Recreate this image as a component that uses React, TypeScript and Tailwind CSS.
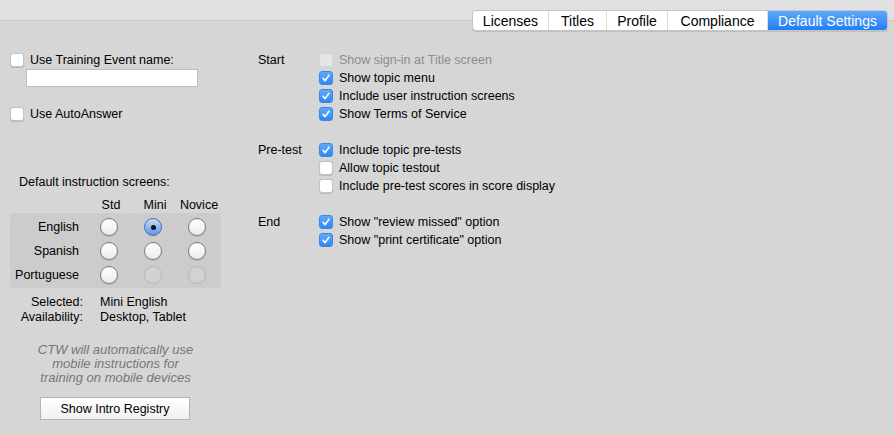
import { useState } from 'react';

const tabs = ['Licenses', 'Titles', 'Profile', 'Compliance', 'Default Settings'];
const tabWidths = [75, 58, 61, 100, 120];

const Check = ({ checked, disabled }: { checked?: boolean; disabled?: boolean }) => {
  if (checked) {
    return (
      <span className="flex h-[14px] w-[14px] shrink-0 items-center justify-center rounded-[3px] border border-[#3a86e8] bg-gradient-to-b from-[#5fa9fb] to-[#2f86f3]">
        <svg width="10" height="10" viewBox="0 0 10 10">
          <path d="M2 5.3 L4.1 7.6 L8 2.3" fill="none" stroke="white" strokeWidth="1.6" strokeLinecap="round" strokeLinejoin="round" />
        </svg>
      </span>
    );
  }
  return (
    <span
      className={
        'block h-[14px] w-[14px] shrink-0 rounded-[3px] border ' +
        (disabled ? 'border-[#d2d2d2] bg-[#e6e6e6]' : 'border-[#c4c4c4] bg-white shadow-[0_0.5px_1px_rgba(0,0,0,0.15)]')
      }
    />
  );
};

const Radio = ({ on, disabled }: { on?: boolean; disabled?: boolean }) => {
  if (on) {
    return (
      <span className="flex h-[18px] w-[18px] items-center justify-center rounded-full border border-[#4a6fa8] bg-gradient-to-b from-[#c9dcf5] to-[#5b95e4]">
        <span className="h-[5px] w-[5px] rounded-full bg-[#111]" />
      </span>
    );
  }
  return (
    <span
      className={
        'block h-[18px] w-[18px] rounded-full border ' +
        (disabled
          ? 'border-[#b5b5b5] bg-[#d2d2d2]'
          : 'border-[#7c7c7c] bg-gradient-to-b from-white to-[#ececec] shadow-[0_1px_1px_rgba(0,0,0,0.12)]')
      }
    />
  );
};

const Row = ({ label, checked, disabled }: { label: string; checked?: boolean; disabled?: boolean }) => (
  <div className="flex h-[18px] items-center gap-[6px]">
    <Check checked={checked} disabled={disabled} />
    <span className={disabled ? 'text-[#8c8c8c]' : 'text-black'}>{label}</span>
  </div>
);

const Group = ({ title, rows }: { title: string; rows: { label: string; checked?: boolean; disabled?: boolean }[] }) => (
  <div className="flex">
    <div className="w-[61px] leading-[18px]">{title}</div>
    <div className="flex flex-col">
      {rows.map((r) => (
        <Row key={r.label} {...r} />
      ))}
    </div>
  </div>
);

export default function App() {
  const [active] = useState('Default Settings');
  const langs = [
    { name: 'English', cells: ['off', 'on', 'off'] },
    { name: 'Spanish', cells: ['off', 'off', 'off'] },
    { name: 'Portuguese', cells: ['off', 'dis', 'dis'] },
  ];

  return (
    <div
      className="h-[435px] w-[894px] overflow-hidden bg-[#d6d6d6] text-[12.5px] leading-[18px] text-black"
      style={{ fontFamily: '"Liberation Sans", Arial, sans-serif' }}
    >
      {/* top band with tabs */}
      <div className="relative h-[21px] border-b border-[#cbcbcb] bg-[#e1e1e1]">
        <div className="absolute left-[472px] top-[10px] flex h-[21px] overflow-hidden rounded-[4px] border border-[#c6c6c6] bg-white text-[14px] shadow-[0_1px_1px_rgba(0,0,0,0.12)]">
          {tabs.map((t, i) => (
            <div
              key={t}
              className={
                'flex items-center justify-center ' +
                (i > 0 ? 'border-l border-[#dcdcdc] ' : '') +
                (t === active ? 'bg-gradient-to-b from-[#5ea7fb] to-[#1f7ef5] text-white' : 'text-black')
              }
              style={{ width: tabWidths[i] }}
            >
              {t}
            </div>
          ))}
        </div>
      </div>

      <div className="flex">
        {/* left column */}
        <div className="w-[258px] pl-[10px] pt-[30px]">
          <div className="flex h-[18px] items-center gap-[6px]">
            <Check />
            <span>Use Training Event name:</span>
          </div>
          <div className="ml-[16px] h-[18px] w-[172px] border border-[#bdbdbd] bg-white" />

          <div className="mt-[18px] flex h-[18px] items-center gap-[6px]">
            <Check />
            <span>Use AutoAnswer</span>
          </div>

          <div className="mt-[50px] pl-[9px]">Default instruction screens:</div>

          <div className="mt-[6px] grid h-[16px] w-[211px] grid-cols-[79px_44px_44px_44px] leading-[16px]">
            <div />
            {['Std', 'Mini', 'Novice'].map((h) => (
              <div key={h} className="text-center">
                {h}
              </div>
            ))}
          </div>

          <div className="flex w-[211px] flex-col gap-[6px] rounded-[4px] bg-[#cccccc] pb-[4px] pt-[5px]">
            {langs.map((l) => (
              <div key={l.name} className="grid h-[18px] grid-cols-[69px_44px_44px_44px] items-center">
                <div className="text-right">{l.name}</div>
                {l.cells.map((c, i) => (
                  <div key={i} className="flex pl-[21px]">
                    <Radio on={c === 'on'} disabled={c === 'dis'} />
                  </div>
                ))}
              </div>
            ))}
          </div>

          <div className="mt-[7px] grid grid-cols-[73px_1fr] gap-x-[17px] leading-[15px]">
            <div className="text-right">Selected:</div>
            <div>Mini English</div>
            <div className="text-right">Availability:</div>
            <div>Desktop, Tablet</div>
          </div>

          <div className="mt-[18px] w-[211px] text-center text-[13px] italic leading-[14px] text-[#777777]">
            CTW will automatically use
            <br />
            mobile instructions for
            <br />
            training on mobile devices
          </div>

          <div className="ml-[30px] mt-[12px] flex h-[23px] w-[150px] items-center justify-center border border-[#b4b4b4] bg-gradient-to-b from-white to-[#f1f1f1]">
            Show Intro Registry
          </div>
        </div>

        {/* right column */}
        <div className="flex flex-col gap-[18px] pt-[30px]">
          <Group
            title="Start"
            rows={[
              { label: 'Show sign-in at Title screen', disabled: true },
              { label: 'Show topic menu', checked: true },
              { label: 'Include user instruction screens', checked: true },
              { label: 'Show Terms of Service', checked: true },
            ]}
          />
          <Group
            title="Pre-test"
            rows={[
              { label: 'Include topic pre-tests', checked: true },
              { label: 'Allow topic testout' },
              { label: 'Include pre-test scores in score display' },
            ]}
          />
          <Group
            title="End"
            rows={[
              { label: 'Show "review missed" option', checked: true },
              { label: 'Show "print certificate" option', checked: true },
            ]}
          />
        </div>
      </div>
    </div>
  );
}
